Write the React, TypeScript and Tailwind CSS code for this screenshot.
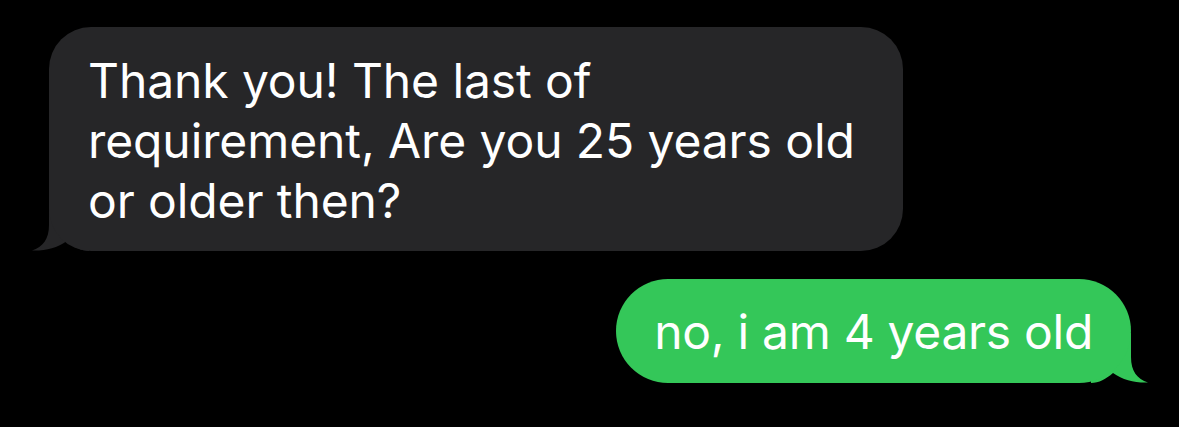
import React from 'react';

function Tail({ color, flip }: { color: string; flip?: boolean }) {
  return (
    <svg
      width="60"
      height="50"
      viewBox="0 0 60 50"
      className={flip ? 'absolute -right-[20px] bottom-0 -scale-x-100' : 'absolute -left-[20px] bottom-0'}
    >
      <path
        d="M20 0 L20 24 C20 38 14 46 3 49.5 C16 50 28 47 38 40 C45 46 52 50 60 50 L60 0 Z"
        fill={color}
      />
    </svg>
  );
}

export default function App() {
  return (
    <div className="w-[1179px] h-[427px] bg-black overflow-hidden font-['Inter',sans-serif] text-white">
      <div className="flex flex-col pt-[27px] pl-[49px] pr-[48px] gap-[28px]">
        <div className="relative self-start w-[854px]">
          <div className="relative z-10 bg-[#262628] rounded-[42px] pl-[39px] pr-[30px] pt-[24px] pb-[20px] text-[48px] leading-[60px] tracking-[-0.1px]">
            Thank you! The last of
            <br />
            requirement, Are you 25 years old
            <br />
            or older then?
          </div>
          <Tail color="#262628" />
        </div>

        <div className="relative self-end">
          <div className="relative z-10 bg-[#34c759] rounded-[52px] pl-[38px] pr-[38px] pt-[23px] pb-[21px] text-[48px] leading-[60px] tracking-[-0.3px] whitespace-nowrap">
            no, i am 4 years old
          </div>
          <Tail color="#34c759" flip />
        </div>
      </div>
    </div>
  );
}
